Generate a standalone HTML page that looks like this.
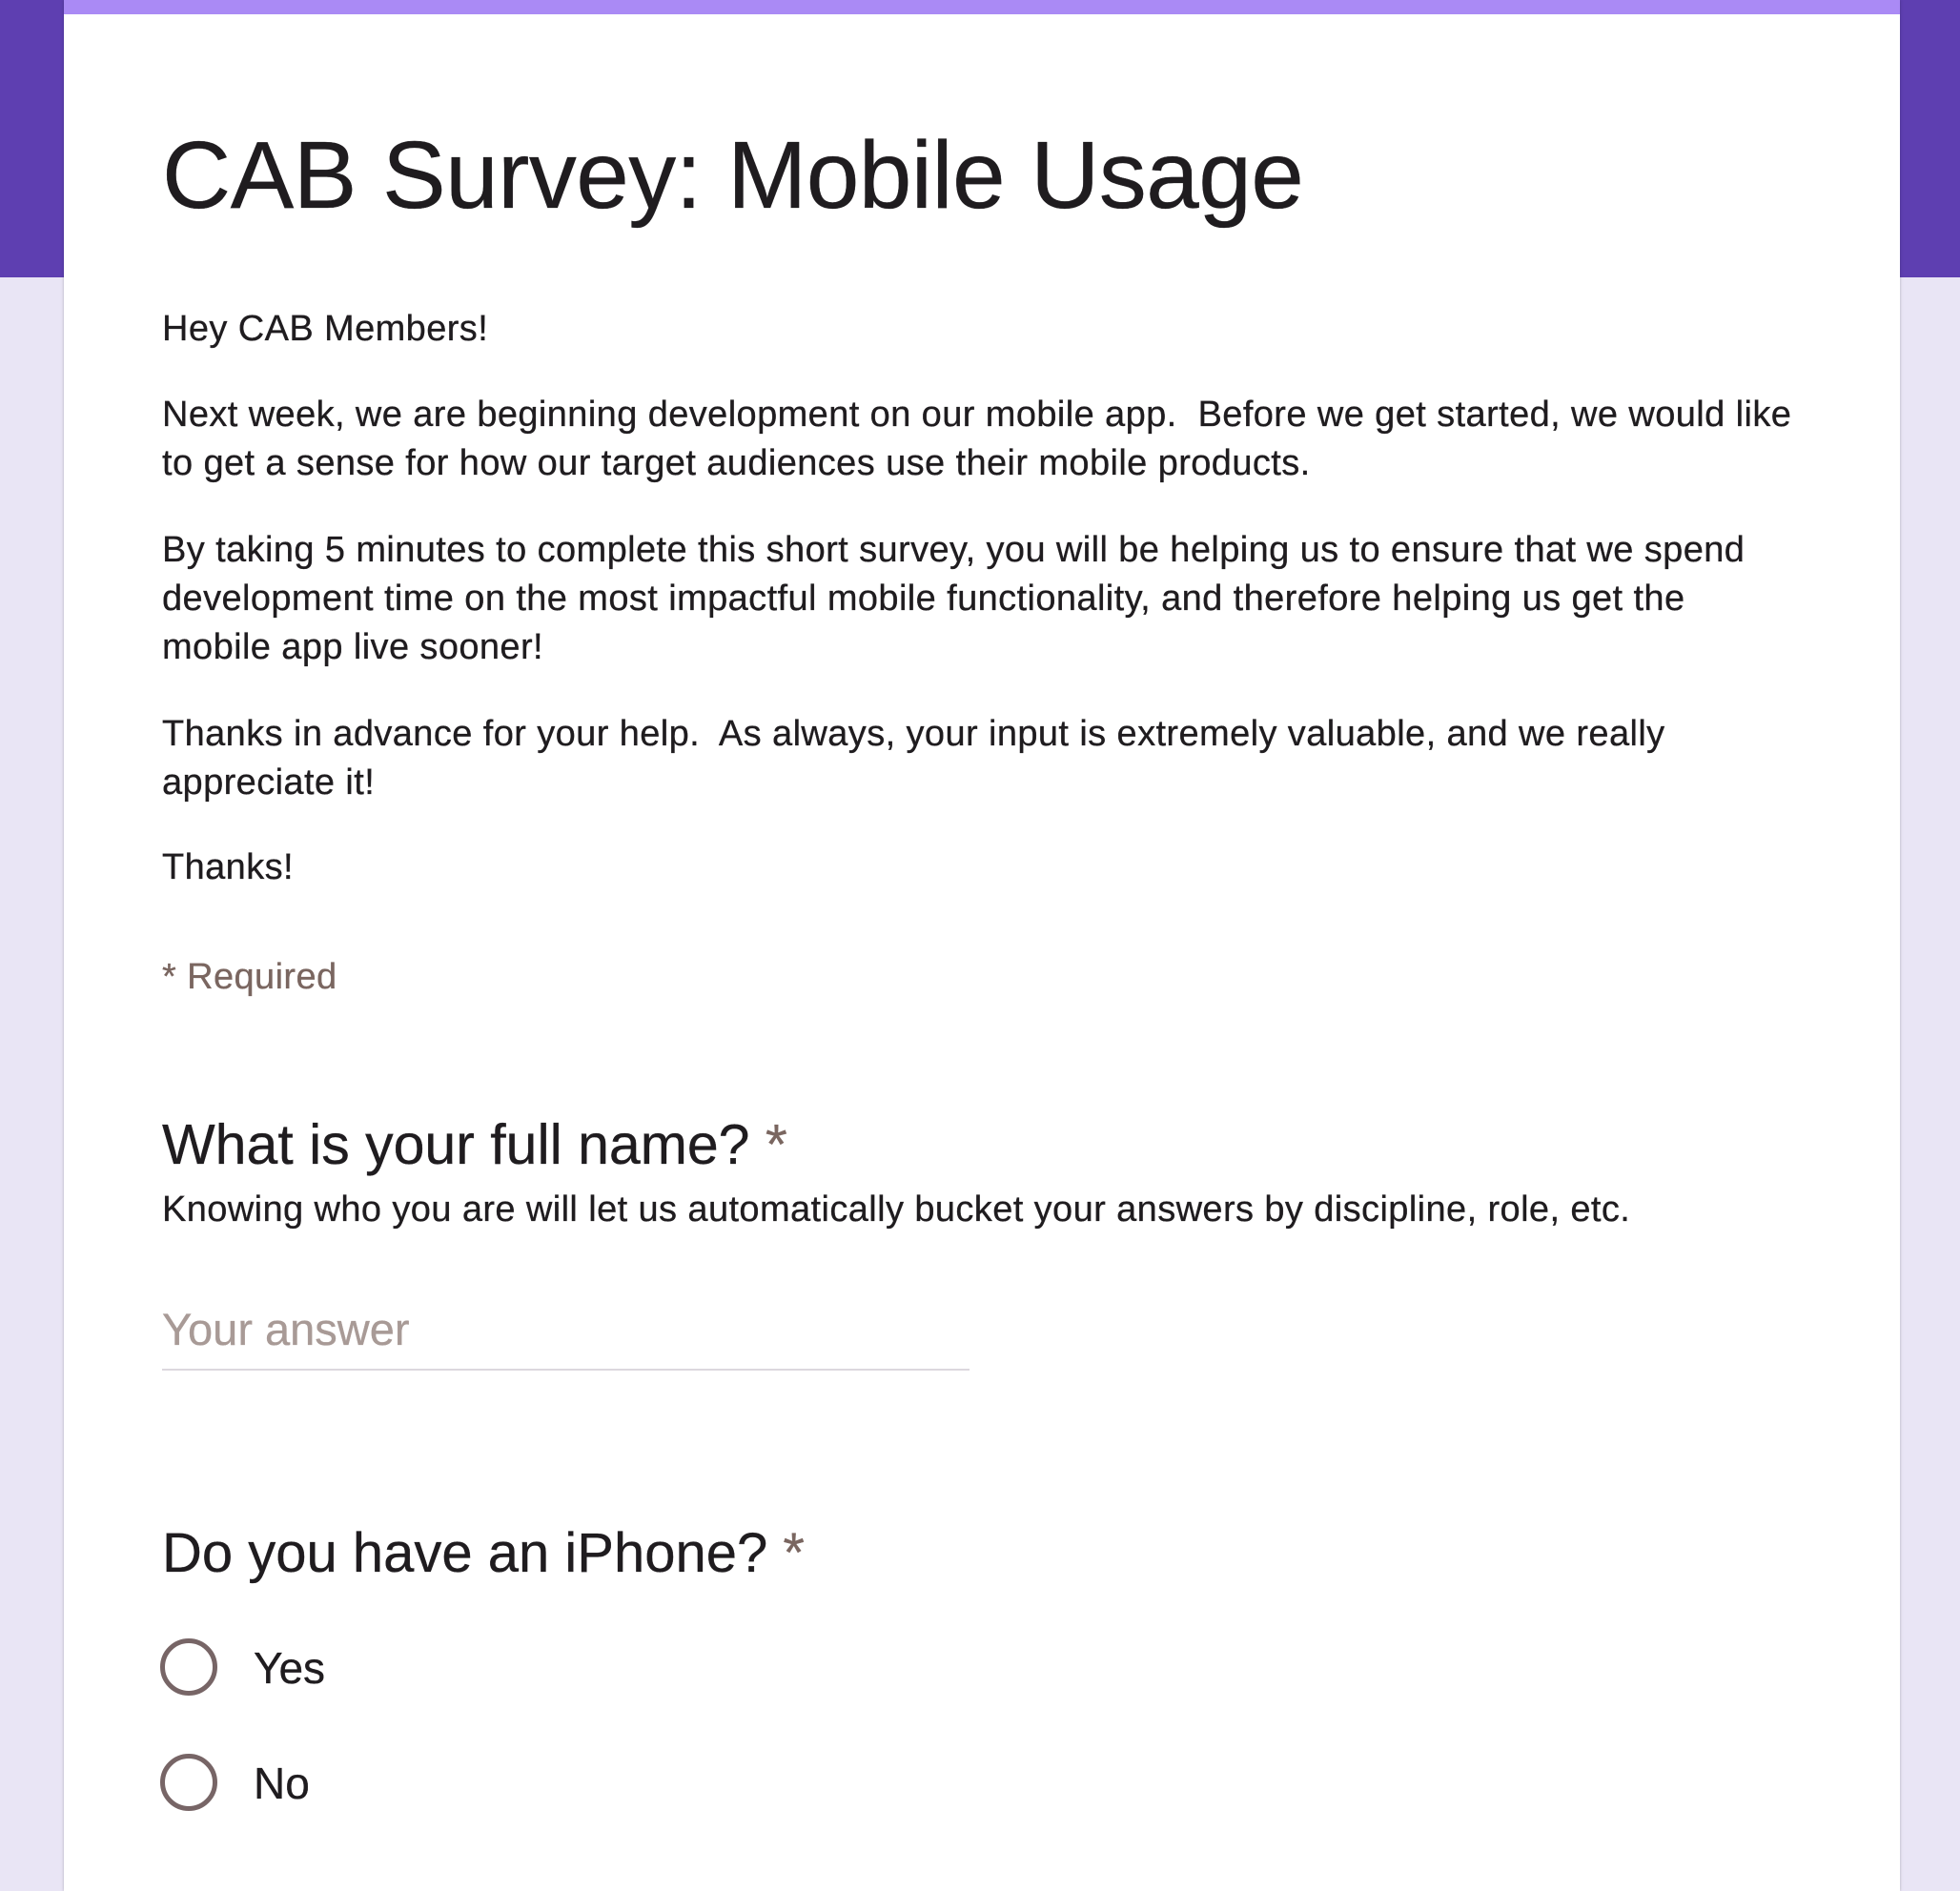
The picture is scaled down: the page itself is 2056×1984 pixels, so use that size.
<!DOCTYPE html>
<html><head><meta charset="utf-8"><style>
*{margin:0;padding:0;box-sizing:border-box}
html,body{width:2056px;height:1984px;overflow:hidden;background:#e9e5f5;font-family:"Liberation Sans",Arial,sans-serif;color:#1f1c1f}
.hdr{position:absolute;left:0;top:0;width:2056px;height:291px;background:#5e3fb1}
.card{position:absolute;left:67px;top:0;width:1926px;height:1984px;background:#fff;box-shadow:0 0 3px rgba(0,0,0,.25)}
.bar{position:absolute;left:67px;top:0;width:1926px;height:15px;background:#aa8af5}
.t{position:absolute;left:170px;white-space:nowrap;-webkit-text-stroke:0.3px currentColor}
.b{font-size:38px;line-height:50px;height:50px;letter-spacing:0.4px}
.star{color:#7a6660}
.r{position:absolute;left:168px;width:60px;height:60px;border:5px solid #776566;border-radius:50%}
</style></head><body>
<div class="hdr"></div>
<div class="card"></div>
<div class="bar"></div>
<div class="t" style="top:124px;font-size:100px;line-height:120px;letter-spacing:-0.6px">CAB Survey: Mobile Usage</div>
<div class="t b" style="top:320px">Hey CAB Members!</div>
<div class="t b" style="top:410px">Next week, we are beginning development on our mobile app.&nbsp; Before we get started, we would like</div>
<div class="t b" style="top:461px">to get a sense for how our target audiences use their mobile products.</div>
<div class="t b" style="top:552px">By taking 5 minutes to complete this short survey, you will be helping us to ensure that we spend</div>
<div class="t b" style="top:603px">development time on the most impactful mobile functionality, and therefore helping us get the</div>
<div class="t b" style="top:654px">mobile app live sooner!</div>
<div class="t b" style="top:745px">Thanks in advance for your help.&nbsp; As always, your input is extremely valuable, and we really</div>
<div class="t b" style="top:796px">appreciate it!</div>
<div class="t b" style="top:885px">Thanks!</div>
<div class="t b star" style="top:1000px">* Required</div>
<div class="t" style="top:1166px;font-size:59px;line-height:70px">What is your full name? <span class="star">*</span></div>
<div class="t b" style="top:1244px;letter-spacing:0.4px">Knowing who you are will let us automatically bucket your answers by discipline, role, etc.</div>
<div class="t" style="top:1367px;font-size:47px;line-height:56px;color:#a89a96">Your answer</div>
<div style="position:absolute;left:170px;top:1436px;width:847px;height:2px;background:#dcd8de"></div>
<div class="t" style="top:1595px;font-size:58px;line-height:70px">Do you have an iPhone? <span class="star">*</span></div>
<div class="r" style="top:1719px"></div>
<div class="t" style="left:266px;top:1722px;font-size:46px;line-height:56px">Yes</div>
<div class="r" style="top:1840px"></div>
<div class="t" style="left:266px;top:1843px;font-size:46px;line-height:56px">No</div>
</body></html>
